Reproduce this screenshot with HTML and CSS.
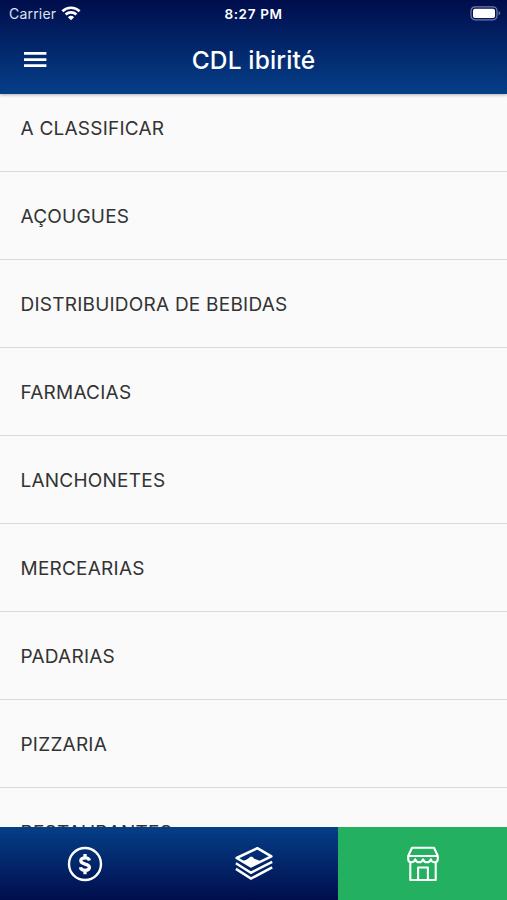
FILE: index.html
```html
<!DOCTYPE html>
<html lang="pt-BR">
<head>
<meta charset="utf-8">
<title>CDL ibirité</title>
<link rel="stylesheet" href="styles.css">
</head>
<body>
<div class="app">
  <header class="header">
    <div class="status">
      <div class="carrier"><span>Carrier</span>
        <svg class="wifi" width="20" height="16" viewBox="0 0 20 16" fill="none" stroke="#fff" stroke-width="2.6"><path d="M1.400 5.200C6.200.600 13.800.600 18.600 5.200"/><path d="M4.600 8.500C7.700 5.700 12.300 5.700 15.400 8.500"/><path d="M10 14.300 6.900 11.200Q10 8.500 13.100 11.200Z" fill="#fff" stroke="none"/></svg>
      </div>
      <div class="time">8:27 PM</div>
      <svg class="battery" width="31" height="16" viewBox="0 0 31 16"><rect x="1" y="0.800" width="26" height="13" rx="4" fill="none" stroke="#747da9" stroke-width="1.2"/><rect x="3" y="2.700" width="22" height="9.2" rx="2" fill="#fff"/><path d="M28.600 5.100q3 2.200 0 4.400Z" fill="#747da9"/></svg>
    </div>
    <div class="toolbar">
      <svg class="menu" width="24" height="18" viewBox="0 0 24 18" fill="#fff"><path d="M1 1.1h22.400v2.700H1zM1 7.200h22.400v2.700H1zM1 13.300h22.400V16H1z"/></svg>
      <h1 class="title">CDL ibirité</h1>
      <span></span>
    </div>
  </header>
  <main class="content">
    <ul class="list">
      <li class="row"><span>A CLASSIFICAR</span></li>
      <li class="row"><span>AÇOUGUES</span></li>
      <li class="row"><span>DISTRIBUIDORA DE BEBIDAS</span></li>
      <li class="row"><span>FARMACIAS</span></li>
      <li class="row"><span>LANCHONETES</span></li>
      <li class="row"><span>MERCEARIAS</span></li>
      <li class="row"><span>PADARIAS</span></li>
      <li class="row"><span>PIZZARIA</span></li>
      <li class="row"><span>RESTAURANTES</span></li>
    </ul>
  </main>
  <nav class="tabs">
    <a class="tab"><svg width="36" height="36" viewBox="0 0 36 36" fill="none" stroke="#fff"><circle cx="18" cy="18" r="16" stroke-width="2.4"/><path d="M22.500 14.500C22 12.600 20.400 11.900 18.100 11.900c-2.700 0-4.300 1.100-4.300 2.900 0 4.300 8.600 2.200 8.600 6.400 0 2-1.700 3.100-4.300 3.100-2.400 0-4.300-1-4.700-3.100M18 8v4.400M18 23.800v4.400" stroke-width="3.300"/></svg></a>
    <a class="tab"><svg width="40" height="36" viewBox="0 0 40 36" fill="none" stroke="#fff" stroke-width="2.500" stroke-linejoin="round"><path d="M23.300 2.200 37.400 10.400 17 20.400 2.600 12Z"/><path d="M8 15.300 12.300 13.800 14.200 12.400 16.300 10.700 18.300 10.700 20.300 12.700 23 13.800 27 15.300 17 20.400Z" fill="#fff" stroke="none"/><path d="M1.900 17.300 17 26.700 38.200 15.900M1.900 22.900 17 32.600 38.200 21.400" stroke-linejoin="miter"/></svg></a>
    <a class="tab active"><svg width="36" height="38" viewBox="0 0 36 38" fill="none" stroke="#fff" stroke-width="2.100" stroke-linejoin="round"><path d="M7 2.700H29L32.800 11H3.200ZM3.200 11v2.700c0 2.300 1.100 3.600 3 3.600 2.200 0 3.600-1.300 4-3 .6 1.700 1.900 3 3.900 3s3.300-1.300 3.900-3c.6 1.700 1.900 3 3.900 3s3.300-1.300 3.900-3c.4 1.700 1.800 3 4 3 1.900 0 3-1.300 3-3.600V11M5.300 17.300V35H30.700V17.300M13.100 35V22.500H22.900V35"/></svg></a>
  </nav>
</div>
</body>
</html>
```
FILE: styles.css
```css
* { box-sizing: border-box; }
body { margin: 0; font-family: Inter, "Liberation Sans", sans-serif; }
.app { height: 900px; display: flex; flex-direction: column; overflow: hidden; background: #fafafa; }
.header {
  flex: 0 0 94px;
  background: linear-gradient(#000d4c, #053f88);
  color: #fff;
  box-shadow: 0 1px 3px rgba(0, 0, 0, .3);
  z-index: 1;
}
.status { height: 27px; display: grid; grid-template-columns: 1fr auto 1fr; align-items: center; }
.carrier { display: flex; align-items: center; gap: 5px; padding-left: 9px; font-size: 14px; letter-spacing: .2px; color: #dfe2ef; }
.time { font-size: 13.5px; font-weight: 600; letter-spacing: .65px; }
.battery { justify-self: end; margin-right: 6px; }
.toolbar { height: 66px; display: grid; grid-template-columns: 1fr auto 1fr; align-items: center; }
.menu { margin-left: 23px; }
.title { margin: 0; font-size: 24.5px; font-weight: 500; letter-spacing: .15px; line-height: 30px; }
.content { flex: 1; min-height: 0; overflow: hidden; }
.list { list-style: none; margin: -10px 0 0; padding: 0; }
.row {
  height: 88px;
  padding: 2px 0 0 20.5px;
  display: flex;
  align-items: center;
  border-bottom: 1px solid #dadada;
  font-size: 19px;
  letter-spacing: .23px;
  color: #333;
}
.tabs { flex: 0 0 73px; display: grid; grid-template-columns: repeat(3, 1fr); background: linear-gradient(#053f88, #000d4c); }
.tab { display: flex; align-items: center; justify-content: center; }
.active { background: #24b061; }
```
